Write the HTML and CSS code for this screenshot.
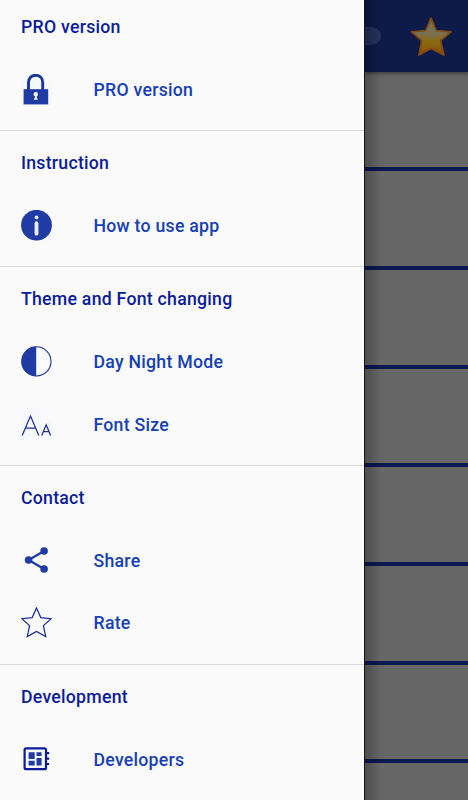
FILE: index.html
```html
<!DOCTYPE html>
<html lang="en">
<head>
<meta charset="utf-8">
<title>Menu</title>
<link rel="stylesheet" href="styles.css">
</head>
<body>
<div class="screen">
  <nav class="drawer">
    <section class="group">
      <h2>PRO version</h2>
      <a class="item"><svg class="icon" viewBox="0 0 31 31"><path fill="#f7f8fb" d="M0 0h31v31H0z"/><path d="M7.500 16V8.700C7.500 4.300 10.500 1.300 14.600 1.300s7.100 3 7.100 7.400V16" fill="none" stroke="#1835a0" stroke-width="2.900"/><path d="M2.600 15.200h24.600v15.200H2.600z"/><circle cx="14.800" cy="20.300" r="2.200" fill="#fff"/><path d="M14 21h1.700v2.300l1.100 2.400h-4l1.200-2.400z" fill="#fff"/></svg><span>PRO version</span></a>
    </section>
    <section class="group">
      <h2>Instruction</h2>
      <a class="item"><svg class="icon" viewBox="0 0 31 31"><path fill="#f7f8fb" d="M0 0h31v31H0z"/><circle cx="15.500" cy="15.200" r="15.400"/><circle cx="15.500" cy="7.400" r="1.900" fill="#e9edfa"/><rect x="13.600" y="11.300" width="3.800" height="14.300" rx="1.900" fill="#e9edfa"/></svg><span>How to use app</span></a>
    </section>
    <section class="group">
      <h2>Theme and Font changing</h2>
      <a class="item"><svg class="icon" viewBox="0 0 31 31"><circle cx="15.400" cy="15.400" r="14.600" fill="#fafbfe" stroke="#1b2f99" stroke-width="1.100"/><path d="M15.200.7a14.700 14.700 0 0 0 0 29.400z"/></svg><span>Day Night Mode</span></a>
      <a class="item"><svg class="icon" viewBox="0 0 31 31"><path fill="#f7f8fb" d="M0 0h20v12h11v19H0z"/><path d="M1.200 26.500 9.500 7l8.300 19.500M4.200 19.200h10.600M20.800 26.500l4.400-10.700 4.400 10.700M22.400 22.700h5.600" fill="none" stroke="#1a2c99" stroke-width="1.250"/></svg><span>Font Size</span></a>
    </section>
    <section class="group">
      <h2>Contact</h2>
      <a class="item"><svg class="icon" viewBox="0 0 31 31"><path d="M23 6 7.600 15 23 24" fill="none" stroke="#1735a3" stroke-width="2.100"/><circle cx="23.100" cy="6" r="3.800"/><circle cx="7.600" cy="15" r="3.800"/><circle cx="23.100" cy="24" r="3.800"/></svg><span>Share</span></a>
      <a class="item"><svg class="icon" viewBox="0 0 31 31"><path d="m15.500 1 4.300 9.600 10.400 1.100-7.800 6.900 2.300 10.900-9.200-5-9.200 5 2.300-10.900-7.800-6.900 10.400-1.100z" fill="none" stroke="#14269a" stroke-width="1.200"/></svg><span>Rate</span></a>
    </section>
    <section class="group">
      <h2>Development</h2>
      <a class="item"><svg class="icon" viewBox="0 0 31 31"><rect x="3.600" y="4.300" width="21.400" height="20.900" rx="1.500" fill="none" stroke="#0b1b9c" stroke-width="2.200"/><path fill="#0b1b9c" d="M25 8.100h3.200v2.200H25zM25 13.500h3.200v2.200H25zM25 18.900h3.200v2.200H25z"/><path d="M7.600 8.300h6.100v6.600H7.600zM15.500 8.300h5.100v3.800h-5.100zM7.600 16.700h6.100v4.800H7.600zM15.500 13.900h5.100v7.600h-5.100z"/></svg><span>Developers</span></a>
    </section>
  </nav>
  <main class="page">
    <header class="bar">
      <span class="toggle"></span>
      <svg class="fav" viewBox="0 0 44 44">
        <defs>
          <linearGradient id="gold" x1="0" y1="0" x2="0" y2="1"><stop offset="0" stop-color="#796a4c"/><stop offset=".42" stop-color="#797155"/><stop offset=".62" stop-color="#8a6b11"/><stop offset=".8" stop-color="#8b5d0b"/><stop offset="1" stop-color="#85430c"/></linearGradient>
        </defs>
        <path d="M22 4.200 27.300 16.500 42 17.800 31.500 26.500 35 41 22 34.500 10 41 12.700 26.500 2.500 17.800 16.700 16.500z" fill="url(#gold)" stroke="#824911" stroke-width="1.700" stroke-linejoin="round"/>
      </svg>
    </header>
    <div class="row first"></div>
    <div class="row"></div>
    <div class="row"></div>
    <div class="row"></div>
    <div class="row"></div>
    <div class="row"></div>
    <div class="row"></div>
    <div class="row"></div>
  </main>
</div>
</body>
</html>
```
FILE: styles.css
```css
* { box-sizing: border-box; }
body { margin: 0; font-family: Roboto, "Liberation Sans", sans-serif; }
.screen { display: flex; width: 468px; height: 800px; overflow: hidden; background: #666; }
.drawer { flex: none; width: 364px; height: 800px; overflow: hidden; background: #fafafa; }
.group { padding-bottom: 9.7px; border-top: 1px solid #d9d9d9; }
.group:first-child { border-top: 0; margin-top: -5.2px; }
.group h2 { margin: 0; padding-left: 21px; height: 63.2px; line-height: 65px; font-size: 17.7px; font-weight: 500; letter-spacing: .25px; color: #0b1c9b; white-space: nowrap; }
.item { display: flex; align-items: center; gap: 41.5px; height: 62.4px; padding-left: 21px; font-size: 17.7px; font-weight: 500; letter-spacing: .25px; color: #1640b4; white-space: nowrap; }
.item span { padding-top: 1px; }
.icon { display: block; flex: none; width: 31px; height: 31px; fill: #203ba3; }
.page { position: relative; flex: 1; min-width: 0; overflow: hidden; border-left: 1px solid #151515; }
.page::after { content: ""; position: absolute; inset: 0 auto 0 0; width: 17px; background: linear-gradient(90deg, rgba(0,0,0,.24), rgba(0,0,0,0)); }
.bar { display: flex; align-items: center; justify-content: space-between; height: 72px; padding-right: 15px; background: #0e1a48; box-shadow: 0 1px 4px rgba(0,0,0,.5); }
.toggle { width: 16px; height: 18px; border-radius: 0 9px 9px 0; background: #26325b; }
.fav { display: block; width: 44px; height: 44px; }
.row { height: 98.7px; border-bottom: 4px solid #0a1950; }
.row.first { height: 99.3px; }
```
